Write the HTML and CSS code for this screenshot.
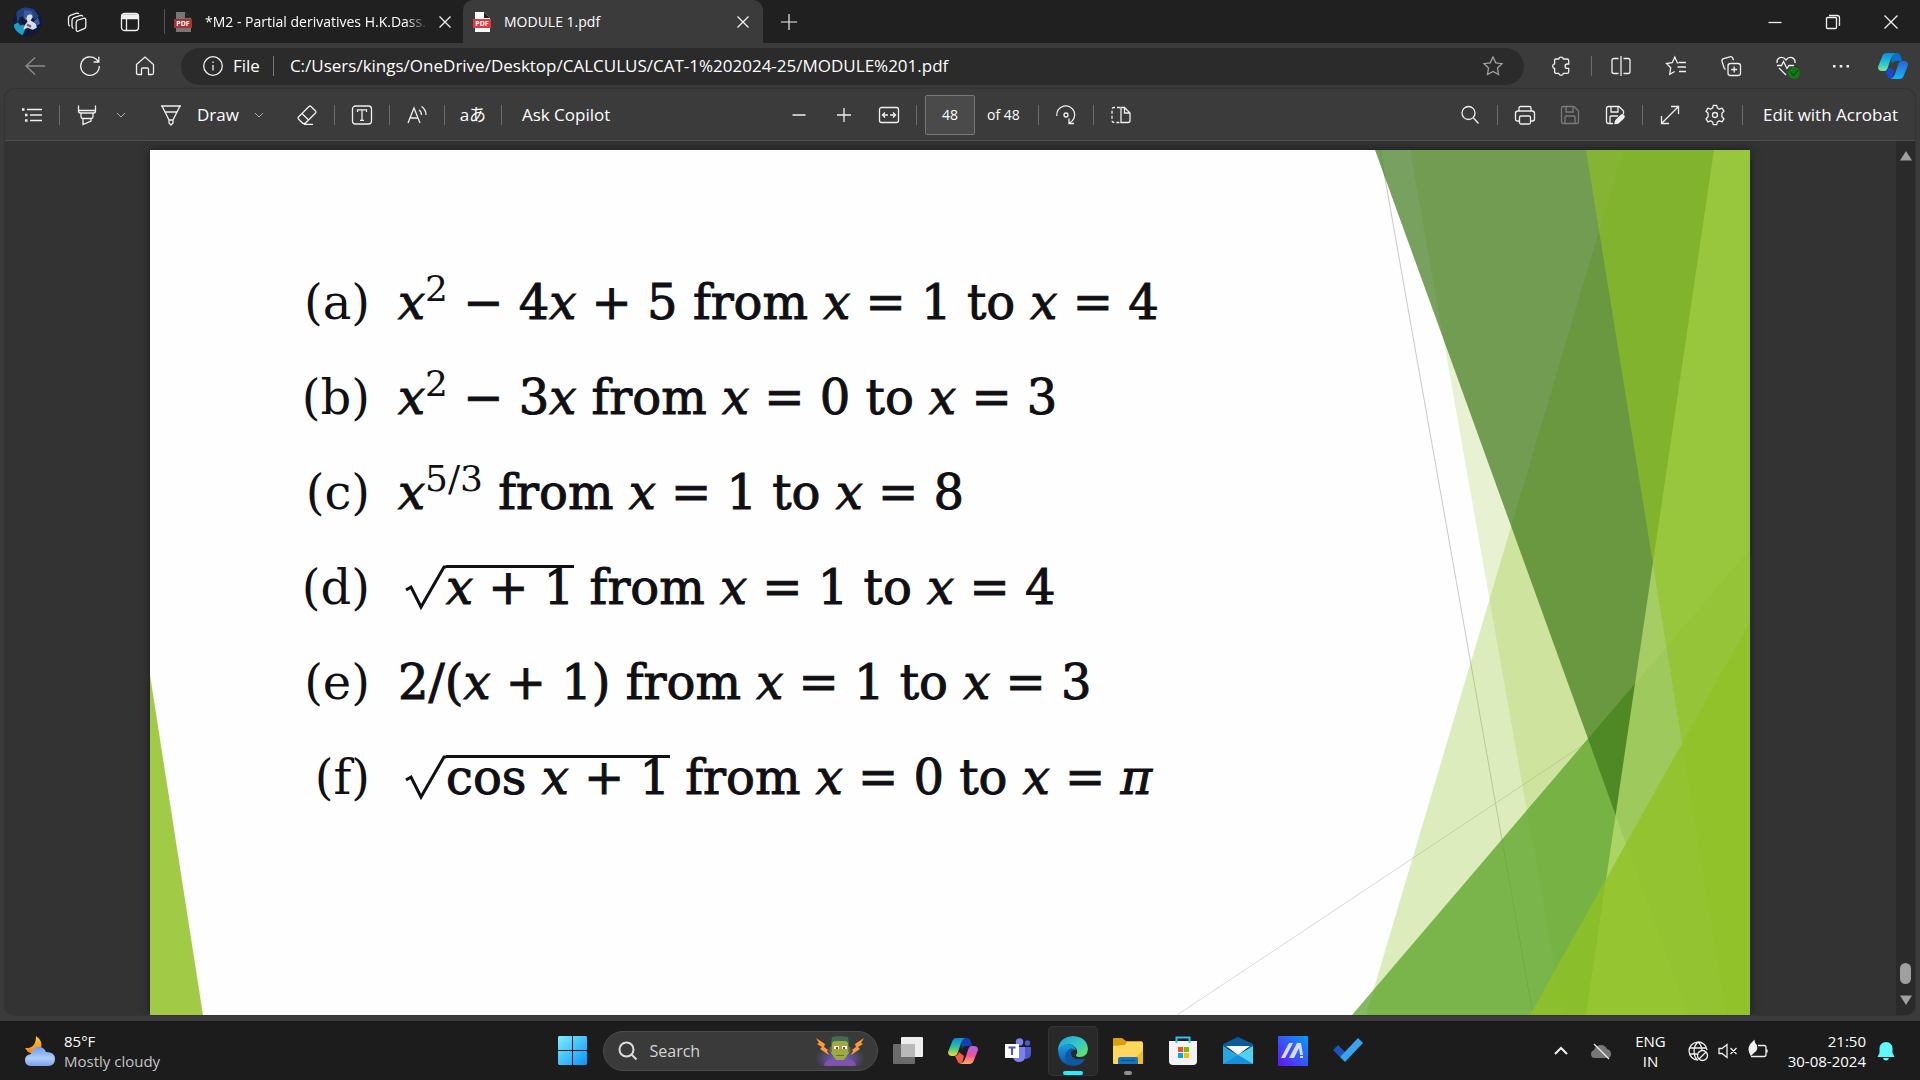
FILE: index.html
```html
<!DOCTYPE html>
<html lang="en">
<head>
<meta charset="utf-8">
<title>MODULE 1.pdf</title>
<link rel="stylesheet" href="styles.css">
</head>
<body>
<header class="tabstrip">
  <button class="avatar" aria-label="Profile"><svg viewBox="0 0 28 28"><defs><clipPath id="av"><circle cx="14" cy="14" r="14"/></clipPath></defs><g clip-path="url(#av)"><path fill="#101b3c" d="M0 0h28v28H0z"/><path fill="#24417e" d="M3 3l8-3 9 2 5 7-4 3-7-5-7 3-3 6z"/><path fill="#17a0c8" d="M1 17l4-2 2 3 3-1 2 4-3 7-8-4z"/><path fill="#d9deee" d="M14 5l4 1 1 4-2 3 5 3 1 4-4 2-5-2-4 2 1-4 3-4-2-4z"/><path fill="#3d5aa6" d="M11 3l7 1 2 5-3-2-3 1-2 5-2-3zM20 14l4-4 2 6-3 2z"/><path fill="#8a5a6a" d="M14 16l4 2-1 2-4-2z"/></g></svg></button>
  <button class="icon" aria-label="Workspaces"><svg viewBox="0 0 20 20"><path d="M9.500 8.500l7-2.200q2-.5 2.300 1.200v7q0 1.500-1.600 2.200l-5.800 2.500q-2 .6-2.200-1.200v-7q0-1.700 1-2.500z"/><path d="M6.500 16.500Q5 16 5 14V8.500Q5 6.500 7 5.700L13.500 3.500q1.700-.4 2.300 1"/><path d="M3 14Q1.500 13.500 1.500 11.500V6Q1.500 4 3.300 3.300L9.500 1.200q1.800-.4 2.400.8"/></svg></button>
  <button class="icon" aria-label="Tab actions"><svg viewBox="0 0 20 20"><rect x="1.500" y="1.500" width="17" height="17" rx="3"/><path class="solid" d="M2 3h16v3.500H2z"/><path d="M6.500 6v12"/></svg></button>
  <div class="tab idle">
    <svg class="favicon" viewBox="0 0 20 20"><path fill="#777" d="M3 0h9l6 6v14H3z"/><path fill="#222" d="M12 0l6 6h-6z"/><path fill="#a83232" d="M1 7h18v9H1z"/><text class="pdf" x="10" y="14">PDF</text></svg>
    <span class="tabname fade">*M2 - Partial derivatives H.K.Dass.</span>
    <button class="close" aria-label="Close tab"><svg viewBox="0 0 20 20"><path d="M4.500 4.500l11 11M15.500 4.500l-11 11"/></svg></button>
  </div>
  <div class="tab active">
    <svg class="favicon" viewBox="0 0 20 20"><path fill="#fff" d="M3 0h9l6 6v14H3z"/><path fill="#222" d="M12 0l6 6h-6z"/><path fill="#e5383b" d="M1 7h18v9H1z"/><text class="pdf" x="10" y="14">PDF</text></svg>
    <span class="tabname">MODULE 1.pdf</span>
    <button class="close" aria-label="Close tab"><svg viewBox="0 0 20 20"><path d="M4.500 4.500l11 11M15.500 4.500l-11 11"/></svg></button>
  </div>
  <button class="icon newtab" aria-label="New tab"><svg viewBox="0 0 20 20"><path d="M10 1v18M1 10h18"/></svg></button>
  <div class="window-controls">
    <button class="win" aria-label="Minimize"><svg viewBox="0 0 20 20"><path d="M3.500 10.500h13"/></svg></button>
    <button class="win" aria-label="Restore"><svg viewBox="0 0 20 20"><rect x="3.500" y="5.500" width="10" height="11" rx="1"/><path d="M6 3.500h8q2.500 0 2.500 2.500v8"/></svg></button>
    <button class="win" aria-label="Close"><svg viewBox="0 0 20 20"><path d="M3.500 3.500l13 13M16.500 3.500l-13 13"/></svg></button>
  </div>
</header>

<nav class="address">
  <button class="icon dim" aria-label="Back"><svg viewBox="0 0 20 20"><path d="M20 10H1M10 1.500L1 10l9 8.500"/></svg></button>
  <button class="icon" aria-label="Refresh"><svg viewBox="0 0 20 20"><path d="M19.300 10A9.300 9.300 0 1 1 16 3l2.500 2.500M18.800.8v5.200h-5.200"/></svg></button>
  <button class="icon" aria-label="Home"><svg viewBox="0 0 20 20"><path d="M1.500 8.500L10 1l8.500 7.500V17q0 1.500-1.500 1.500h-3.500V13q0-1-1-1h-5q-1 0-1 1v5.500H3Q1.500 18.500 1.500 17z"/></svg></button>
  <div class="urlbox">
    <svg class="glyph" viewBox="0 0 20 20"><circle cx="10" cy="10" r="9.300"/><path d="M10 9v5.500M10 5.500v1.500"/></svg>
    <label class="scheme" for="url">File</label>
    <input class="url" id="url" type="text" value="C:/Users/kings/OneDrive/Desktop/CALCULUS/CAT-1%202024-25/MODULE%201.pdf">
    <button class="icon muted" aria-label="Add to favourites"><svg viewBox="0 0 20 20"><path d="M10 1l2.800 5.800 6.200.9-4.500 4.400 1 6.400L10 15.500l-5.500 3 1-6.400L1 7.700l6.200-.9z"/></svg></button>
  </div>
  <div class="browser-actions">
    <button class="icon" aria-label="Extensions"><svg viewBox="0 0 20 20"><path d="M4.500 3H7.700a2.400 2.400 0 0 1 4.700 0H16q1.700 0 1.700 1.700V8h-1.400a2.200 2.200 0 0 0 0 4.400h1.400v3.300q0 1.700-1.700 1.700h-3.600a2.400 2.400 0 0 1-4.700 0H5.300q-1.700 0-1.700-1.700v-3.200a2.400 2.400 0 0 1 0-4.700V4q0-1 .9-1z"/></svg></button>
    <span class="rule"></span>
    <button class="icon" aria-label="Split screen"><svg viewBox="0 0 20 20"><path d="M7.500 2.500H3q-2 0-2 2v11q0 2 2 2h4.500M12.500 2.500H17q2 0 2 2v11q0 2-2 2h-4.500M10 0v20"/></svg></button>
    <button class="icon" aria-label="Favourites"><svg viewBox="0 0 20 20"><path d="M12.500 7L11.300 6.700 8.800 1 6.200 6.700.5 7.500l4.200 4.300-1 6.500 5-2.800M13 6.500h7M11.500 11H20M13 15.500h7"/></svg></button>
    <button class="icon" aria-label="Collections"><svg viewBox="0 0 20 20"><rect x="7" y="7.500" width="12.500" height="12" rx="2.500"/><path d="M13.200 10.500v6M10.200 13.500h6M4.500 13.500Q3.500 13 3 11.500L1 5.500Q.5 3.500 2.500 2.700L9 .8q2-.5 2.800 1.500l.7 2"/></svg></button>
    <button class="icon badged" aria-label="Browser essentials"><svg viewBox="0 0 20 20"><path d="M1 7Q.5 3 4 1.600 7.500.5 10 4q2.500-3.500 6-2.400Q19.500 3 19 7M3 12l7 7M1 9.500h4.500l2-4 3.500 7 2-3h5"/></svg><span class="badge"></span></button>
    <button class="icon" aria-label="More"><svg viewBox="0 0 20 20"><path class="solid plain" d="M2 9h2.500v2.500H2zM8.700 9h2.600v2.500H8.700zM15.500 9H18v2.500h-2.500z"/></svg></button>
  </div>
  <button class="copilot" aria-label="Copilot"><svg viewBox="0 0 30 30"><defs><linearGradient id="ca" x2="0" y2="1"><stop stop-color="#0c8fe0"/><stop offset=".5" stop-color="#20bfd8"/><stop offset="1" stop-color="#7be89a"/></linearGradient><linearGradient id="cb" x2="0" y2="1"><stop stop-color="#2b62dc"/><stop offset="1" stop-color="#14b9f5"/></linearGradient></defs><path fill="#0872c4" d="M13 2h6q3 0 4 4l1 4h-6q-3 0-4 4z"/><path fill="#1649d4" d="M7 20q3 0 4-4l5 4-2 8q-4 0-5-4z"/><path fill="url(#ca)" d="M9 2h8q-3 2-4 5l-3 9q-1 4-4 4H4q-4 0-4-4L4 6q1-4 5-4z"/><path fill="url(#cb)" d="M21 28h-8q3-2 4-5l3-9q1-4 4-4h2q4 0 4 4l-4 10q-1 4-5 4z"/></svg></button>
</nav>

<main class="viewer">
  <div class="toolbar">
    <div class="group">
      <button class="icon" aria-label="Contents"><svg viewBox="0 0 20 20"><path d="M5 4.500h15M8 10h12M8 15.500h12"/><path class="solid plain" d="M0 3.300h2.500v2.500H0zM3 8.800h2.500v2.500H3zM3 14.300h2.500v2.500H3z"/></svg></button>
      <span class="rule"></span>
      <button class="icon" aria-label="Highlight"><svg viewBox="0 0 20 20"><path d="M1.500.5V6q0 2 2 2h13q2 0 2-2V.5M4 8v3.500q0 2 1.500 2h9q1.500 0 1.500-2V8M6 14v5.500l8-3.500v-2M1.500 5.500h17"/></svg></button>
      <button class="chev" aria-label="Highlight colours"><svg viewBox="0 0 10 10"><path d="M1 3l4 4 4-4"/></svg></button>
      <button class="draw"><svg viewBox="0 0 20 20"><path d="M0 1h20M1 1l7 14v3l2 2 2-2v-3l7-14M4 7h12M8 15h4"/></svg>Draw</button>
      <button class="chev" aria-label="Pen options"><svg viewBox="0 0 10 10"><path d="M1 3l4 4 4-4"/></svg></button>
      <button class="icon eraser" aria-label="Erase"><svg viewBox="0 0 20 20"><path d="M1.500 12L12 1.500q1-1 2 0L18.500 6q1 1 0 2L8 18.500H6L1.500 14q-1-1 0-2zM5 8.500l6.500 6.500M7 19.300h9"/></svg></button>
      <span class="rule"></span>
      <button class="icon" aria-label="Add text"><svg viewBox="0 0 20 20"><rect x=".5" y="1" width="19" height="18" rx="3"/><path d="M5.500 7V4.800h9V7M10 4.800v10.500M8 15.300h4"/></svg></button>
      <span class="rule"></span>
      <button class="icon" aria-label="Read aloud"><svg viewBox="0 0 20 20"><path d="M1 18L7 3l6 15M3 13h8M12 5q2.500 1.500 2.500 5M14.500 1.500Q19 4.500 19 10"/></svg></button>
      <span class="rule"></span>
      <button class="icon translate" aria-label="Translate">aあ</button>
      <span class="rule"></span>
      <button class="text">Ask Copilot</button>
    </div>
    <div class="group center">
      <button class="icon" aria-label="Zoom out"><svg viewBox="0 0 20 20"><path d="M3.500 10h13"/></svg></button>
      <button class="icon spaced" aria-label="Zoom in"><svg viewBox="0 0 20 20"><path d="M10 3v14M3 10h14"/></svg></button>
      <button class="icon spaced" aria-label="Fit to width"><svg viewBox="0 0 20 20"><rect x=".5" y="2.500" width="19" height="15" rx="2"/><path d="M9 10H4M6 7.500L3.500 10 6 12.500M11 10h5M14 7.500l2.500 2.500-2.500 2.500"/></svg></button>
      <span class="rule tight"></span>
      <input class="page" type="text" value="48" aria-label="Page number">
      <span class="total">of 48</span>
      <span class="rule"></span>
      <button class="icon" aria-label="Rotate"><svg viewBox="0 0 20 20"><path d="M.8 11A9 9 0 1 1 13.500 18M13 13.500v5h5"/><circle cx="10" cy="10" r="2"/></svg></button>
      <span class="rule"></span>
      <button class="icon" aria-label="Page view"><svg viewBox="0 0 20 20"><path d="M10 2.500v15h7q2 0 2-2V8l-5.500-5.500zM13.500 3v5H19"/><path stroke-dasharray="3 2" d="M9 2.500H3q-2 0-2 2v11q0 2 2 2h6"/></svg></button>
    </div>
    <div class="group end">
      <button class="icon" aria-label="Find"><svg viewBox="0 0 20 20"><circle cx="8.500" cy="8" r="6.500"/><path d="M13.500 13l5 5.500"/></svg></button>
      <span class="rule"></span>
      <button class="icon" aria-label="Print"><svg viewBox="0 0 20 20"><path d="M4 6V3q0-1.500 1.500-1.500h9Q16 1.500 16 3v3M4 16H2.500Q.5 16 .5 14V8.500Q.5 6 3 6h14q2.500 0 2.500 2.500V14q0 2-2 2H16"/><rect x="4.500" y="11" width="11" height="8" rx="1.500"/></svg></button>
      <button class="icon spaced off" aria-label="Save"><svg viewBox="0 0 20 20"><path d="M3.500 1.500H14L18.500 6v10.500q0 2-2 2h-13q-2 0-2-2v-13q0-2 2-2zM6 2v5h7V2M5 18v-6q0-1 1-1h8q1 0 1 1v6"/></svg></button>
      <button class="icon spaced" aria-label="Save as"><svg viewBox="0 0 20 20"><path d="M8 18.500H3.500q-2 0-2-2v-13q0-2 2-2H14L18.500 6v3M6 2v5h7V2M5 18v-6q0-1 1-1h7"/><path class="solid" d="M10 18.500l.8-3 5.500-5.500q1.500-.8 2.500.7.8 1.200 0 2L13 18.200z"/></svg></button>
      <span class="rule"></span>
      <button class="icon" aria-label="Full screen"><svg viewBox="0 0 20 20"><path d="M1.500 18.500l17-17M11 1.500h7.500V9M1.500 11v7.500H9"/></svg></button>
      <button class="icon spaced" aria-label="Settings"><svg viewBox="0 0 20 20"><path stroke-linejoin="round" d="M8.300.3h3.400l.7 2.700 2 1.100 2.700-.9 1.900 3.100-2.100 1.900v3.600l2.100 1.900-1.900 3.100-2.700-.9-2 1.100-.7 2.700H8.300l-.7-2.700-2-1.100-2.700.9L1 13.700l2.100-1.900V8.200L1 6.300l1.900-3.100 2.700.9 2-1.100z"/><circle cx="10" cy="10" r="2.500"/></svg></button>
      <span class="rule"></span>
      <button class="text">Edit with Acrobat</button>
    </div>
  </div>

  <div class="stage">
    <article class="slide">
      <svg class="facets" viewBox="0 0 1600 865" preserveAspectRatio="none" aria-hidden="true">
        <path fill="none" stroke="#c8c8c8" d="M1230 0l153 865"/>
        <path fill="none" stroke="#d9d9d9" d="M1027 865L1600 484"/>
        <path fill="#90c226" fill-opacity=".3" d="M1473 0h127v865h-384z"/>
        <path fill="#90c226" fill-opacity=".2" d="M1260 0h340v865h-187z"/>
        <path fill="#54a021" fill-opacity=".72" d="M1202 865L1600 399v466z"/>
        <path fill="#3f7819" fill-opacity=".7" d="M1225 0h375v865h-62z"/>
        <path fill="#c0e474" fill-opacity=".7" d="M1564 0h36v865h-164z"/>
        <path fill="#90c226" fill-opacity=".65" d="M1436 0h164v865h-24z"/>
        <path fill="#90c226" fill-opacity=".8" d="M1380 865l220-393v393z"/>
        <path fill="#90c226" fill-opacity=".85" d="M0 525l53 340H0z"/>
      </svg>
      <ul class="problems">
        <li><span class="mark">(a)</span><span class="expr"><i>x</i><sup>2</sup> <b>−</b> 4<i>x</i> <b>+</b> 5 from <i>x</i> <b>=</b> 1 to <i>x</i> <b>=</b> 4</span></li>
        <li><span class="mark">(b)</span><span class="expr"><i>x</i><sup>2</sup> <b>−</b> 3<i>x</i> from <i>x</i> <b>=</b> 0 to <i>x</i> <b>=</b> 3</span></li>
        <li><span class="mark">(c)</span><span class="expr"><i>x</i><sup>5/3</sup> from <i>x</i> <b>=</b> 1 to <i>x</i> <b>=</b> 8</span></li>
        <li><span class="mark">(d)</span><span class="expr"><svg class="radical" viewBox="0 0 42 46"><path d="M2 25l5-3 10 20L40 2h2"/></svg><span class="radicand"><i>x</i> <b>+</b> 1</span> from <i>x</i> <b>=</b> 1 to <i>x</i> <b>=</b> 4</span></li>
        <li><span class="mark">(e)</span><span class="expr">2/(<i>x</i> <b>+</b> 1) from <i>x</i> <b>=</b> 1 to <i>x</i> <b>=</b> 3</span></li>
        <li><span class="mark">(f)</span><span class="expr"><svg class="radical" viewBox="0 0 42 46"><path d="M2 25l5-3 10 20L40 2h2"/></svg><span class="radicand">cos <i>x</i> <b>+</b> 1</span> from <i>x</i> <b>=</b> 0 to <i>x</i> <b>=</b> <i>π</i></span></li>
      </ul>
    </article>
    <div class="scrollbar">
      <svg viewBox="0 0 12 10"><path d="M6 0l6 9.500H0z"/></svg>
      <span class="thumb"></span>
      <svg viewBox="0 0 12 10"><path d="M6 10L0 .5h12z"/></svg>
    </div>
  </div>
</main>

<footer class="taskbar">
  <div class="weather">
    <svg viewBox="0 0 30 30"><defs><linearGradient id="cl" x2="0" y2="1"><stop stop-color="#6c9cf0"/><stop offset=".6" stop-color="#b0cbf8"/><stop offset="1" stop-color="#7ba2ee"/></linearGradient><linearGradient id="mo" x2="0" y2="1"><stop stop-color="#ffc83a"/><stop offset="1" stop-color="#f0821c"/></linearGradient></defs><path fill="url(#mo)" d="M11 0q7 5 5 12-5 9-13 4l-3-4q11 1 11-12z"/><path fill="url(#cl)" d="M7 30q-7 0-7-6 0-5 6-6 2-7 8-7 5 0 7 5 9 0 9 7 0 7-7 7z"/></svg>
    <div class="lines"><span>85°F</span><span class="sub">Mostly cloudy</span></div>
  </div>
  <div class="apps">
    <button class="app" aria-label="Start"><svg viewBox="0 0 30 30"><defs><linearGradient id="wi" x2="1" y2="1"><stop stop-color="#7defff"/><stop offset="1" stop-color="#0a93fb"/></linearGradient></defs><path fill="url(#wi)" d="M1 0h13v14H0V1zM15 0h13l1 1v13H15zM0 15h14v14H1l-1-1zM15 15h14v13l-1 1H15z"/></svg></button>
    <label class="search"><svg class="lens" viewBox="0 0 20 20"><circle cx="8.500" cy="8.500" r="7"/><path d="M13.500 13.500l5 5"/></svg><input type="text" placeholder="Search">
      <svg class="monster" viewBox="0 0 50 30"><defs><radialGradient id="gl"><stop stop-color="#7a68d8"/><stop offset="1" stop-color="#7a68d8" stop-opacity="0"/></radialGradient></defs><ellipse cx="25" cy="23" rx="25" ry="14" fill="url(#gl)"/><path fill="#7f52ae" d="M9 30q0-6 8-7h16q8 1 8 7z"/><path fill="#9ba843" d="M17 3h16l1 14-5 7h-8l-5-7z"/><path fill="#426b52" d="M17 1q8-2 16 0l1 7-3-3H19l-3 3z"/><path fill="#6b7a2e" d="M15 11h2v5h-2zM33 11h2v5h-2zM21 19h8v1h-8z"/><path fill="#fff" d="M19 10h5v3h-5zM27 10h5v3h-5z"/><path fill="#c22" d="M21 11h2v2h-2zM28 11h2v2h-2z"/><path fill="#ff9a3a" d="M1 2l9 6-1 3 4 3-1 1 2 4-9-6 2-2-5-3 2-1zM49 2l-9 6 1 3-4 3 1 1-2 4 9-6-2-2 5-3-2-1z"/></svg></label>
    <button class="app" aria-label="Task view"><svg viewBox="0 0 30 30"><rect x="8" y="1" width="22" height="20" rx="1" fill="#eee"/><rect y="8" width="22" height="20" rx="1" fill="#6b6b6b"/><path fill="#b9b9b9" d="M8 8h14v13H8z"/></svg></button>
    <button class="app" aria-label="Copilot"><svg viewBox="0 0 30 30"><defs><linearGradient id="cc" x2="0" y2="1"><stop stop-color="#0b86e0"/><stop offset=".5" stop-color="#26c4a0"/><stop offset="1" stop-color="#f4dc2a"/></linearGradient><linearGradient id="cd" x2="0" y2="1"><stop stop-color="#a866ee"/><stop offset=".5" stop-color="#ee4f9e"/><stop offset="1" stop-color="#ffae58"/></linearGradient></defs><path fill="#123fb4" d="M13 2h6q3 0 4 4l1 4h-6q-3 0-4 4z"/><path fill="#f25a4c" d="M7 20q3 0 4-4l5 4-2 8q-4 0-5-4z"/><path fill="url(#cc)" d="M9 2h8q-3 2-4 5l-3 9q-1 4-4 4H4q-4 0-4-4L4 6q1-4 5-4z"/><path fill="url(#cd)" d="M21 28h-8q3-2 4-5l3-9q1-4 4-4h2q4 0 4 4l-4 10q-1 4-5 4z"/></svg></button>
    <button class="app" aria-label="Teams"><svg viewBox="0 0 30 30"><circle cx="16.500" cy="6" r="3.800" fill="#7b83eb"/><circle cx="24.500" cy="7" r="2.700" fill="#5059c9"/><path fill="#5059c9" d="M20 11h8v7q0 4-5 5h-3z"/><path fill="#7b83eb" d="M10 11h12v9q0 6-6 6-5 0-6-5z"/><path fill="#fff" d="M2 8h14v14H2z"/><path fill="#4b53bc" d="M5.500 10.500h7v2H10V19H8v-6.500H5.500z"/></svg></button>
    <button class="app current" aria-label="Edge"><svg viewBox="0 0 30 30"><defs><linearGradient id="ea" x2="1" y2="1"><stop stop-color="#1b9de2"/><stop offset=".5" stop-color="#35c8c8"/><stop offset="1" stop-color="#6ae84e"/></linearGradient><linearGradient id="eb" x2="0" y2="1"><stop stop-color="#1aa0e0"/><stop offset="1" stop-color="#0a50a8"/></linearGradient></defs><path fill="url(#eb)" d="M0 14Q2 7 9 8q8 1 9 6-6-1-5 5 2 6 14 4-4 7-12 7Q1 29 0 14z"/><path fill="#0c59a4" d="M10 28q-6-8 0-14 3-3 7 0-5 0-4 5 2 6 14 4-5 9-17 5z"/><path fill="url(#ea)" d="M0 14Q1 1 15 0q14 1 15 13-1 8-8 8-4 0-4-2 2-2 1-5-2-5-9-6-7 0-10 6z"/></svg></button>
    <button class="app open" aria-label="File Explorer"><svg viewBox="0 0 30 30"><path fill="#d9a00c" d="M0 3q0-1 1-1h8l4 3h16v5H0z"/><path fill="#ffd75a" d="M0 10l12-1 2-3h15q1 0 1 1v20q0 1-1 1H1q-1 0-1-1z"/><path fill="#f6bd20" d="M16 28h13q1 0 1-1V14z"/><path fill="#1572c4" d="M5 28v-5q0-2 2-2h16q2 0 2 2v5z"/><path fill="#0a4f92" d="M8 24h14v1H8z"/></svg></button>
    <button class="app" aria-label="Microsoft Store"><svg viewBox="0 0 30 30"><path fill="none" stroke="#30c0ec" stroke-width="2" d="M8.500 8V1.500h13V8"/><path fill="#f3f3f3" d="M1 5h28v20q0 4-4 4H5q-4 0-4-4z"/><path fill="#30c0ec" d="M7.500 5h2v2h-2zM20.500 5h2v2h-2z"/><path fill="#f25022" d="M10 11h5v5h-5z"/><path fill="#7fba00" d="M16 11h5v5h-5z"/><path fill="#00a4ef" d="M10 17h5v5h-5z"/><path fill="#ffb900" d="M16 17h5v5h-5z"/></svg></button>
    <button class="app" aria-label="Mail"><svg viewBox="0 0 30 30"><path fill="#0a5a9e" d="M0 8L15 1l15 7v4H0z"/><path fill="#2aa5dd" d="M0 10l15 9 15-9v18H0z"/><path fill="#50d2f5" d="M15 19l15-9v18z"/><path fill="#1490dc" d="M0 28l15-9 15 9z"/><path fill="#f4f4f4" d="M3 10h24l-12 9z"/></svg></button>
    <button class="app" aria-label="MyASUS"><svg viewBox="0 0 30 30"><defs><linearGradient id="my" x1="0" y1="1" x2="1" y2="0"><stop stop-color="#6414f5"/><stop offset="1" stop-color="#069cfb"/></linearGradient></defs><path fill="url(#my)" d="M0 0h30v30H0z"/><path fill="#d8dcff" d="M3 22L11 7h4L7 22zM11 22l8-15h4l2 12h-3l-1-7-5 10zM22 20h3v2h-3z"/></svg></button>
    <button class="app" aria-label="To Do"><svg viewBox="0 0 30 30"><path fill="#1857b8" d="M0 14l5-5 7 7-5 5z"/><path fill="#3ba3ee" d="M7 21L25 2l5 5-18 19z"/></svg></button>
  </div>
  <div class="tray">
    <svg class="tico" viewBox="0 0 20 20"><path stroke-width="2" d="M4 13l6-6 6 6"/></svg>
    <svg class="tico cloud" viewBox="0 0 20 20"><path class="grey" d="M4 17q-4 0-4-4 0-3 3-4 2-5 7-5 4 0 6 4 4 1 4 5 0 4-4 4z"/><path d="M3 3l15 15"/></svg>
    <div class="lines lang"><span>ENG</span><span>IN</span></div>
    <svg class="tico" viewBox="0 0 20 20"><path d="M10 19A9 9 0 1 1 19 9M1.500 7h17M1.500 13H9M10 1Q6 5 6 10t3 9M10 1q3.500 3 4 8"/><circle cx="14.500" cy="14.500" r="5"/><path d="M11 18l7-7"/></svg>
    <svg class="tico" viewBox="0 0 20 20"><path d="M1 7.500h3L9 3.500v13l-5-4H1zM12.500 7l6 6M18.500 7l-6 6"/></svg>
    <svg class="tico" viewBox="0 0 20 20"><path d="M10 4.500h6q2 0 2 2v7q0 2-2 2H3M19 8.500v3"/><path class="solid" d="M2 12Q-1 6 6 0q0 2 2 4 2 5-2 7l-3 3z"/></svg>
    <div class="lines clock"><span>21:50</span><span>30-08-2024</span></div>
    <svg class="bell" viewBox="0 0 20 20"><path d="M10 1q6 0 6.500 6.500V12l2 4h-17l2-4V7.500Q4 1 10 1zM7 17h6q-.5 2.500-3 2.500T7 17z"/></svg>
  </div>
</footer>
</body>
</html>
```
FILE: styles.css
```css
* { box-sizing: border-box; }
body {
  margin: 0;
  min-height: 100vh;
  display: flex;
  flex-direction: column;
  background: #3b3b3b;
  color: #fff;
  font: 17px/20px "Open Sans", "Noto Sans", sans-serif;
}
button, input { font: inherit; color: inherit; }
button {
  border: 0;
  padding: 0;
  background: none;
  display: flex;
  align-items: center;
  justify-content: center;
  flex: none;
}
input { border: 0; outline: 0; background: none; min-width: 0; padding: 0; }
svg { display: block; flex: none; }

.icon { width: 28px; height: 28px; }
.icon svg, .glyph, .draw svg, .win svg, .tico, .close svg {
  width: 20px;
  height: 20px;
  fill: none;
  stroke: #f0f0f0;
  stroke-width: 1.3;
  overflow: visible;
}
.icon .solid, .tico .solid { fill: #f0f0f0; }
.icon .plain { stroke: none; }
.dim { opacity: .45; }
.muted { opacity: .6; }
.off { opacity: .35; }
.rule { width: 1px; height: 20px; margin: 0 13px; background: #6c6c6c; flex: none; }

/* Tab strip */
.tabstrip { display: flex; align-items: center; height: 43px; padding-left: 13px; background: #202020; }
.avatar svg { width: 29px; height: 29px; }
.tabstrip > .icon { margin-left: 21px; }
.tabstrip .avatar + .icon + .icon { margin-left: 25px; }
.tab { display: flex; align-items: center; height: 43px; width: 300px; padding: 0 10px 0 9px; font-size: 14px; flex: none; }
.idle { margin-left: 20px; width: 299px; padding-right: 8px; }
.idle::before { content: ""; width: 1px; height: 25px; margin: 0 8px 0 -9px; background: #555; }
.active { background: #3b3b3b; border-radius: 10px 10px 0 0; }
.favicon { width: 20px; height: 20px; margin-right: 12px; }
.pdf { font: bold 7px "Open Sans", sans-serif; fill: #fff; text-anchor: middle; }
.tabname { flex: 1; min-width: 0; overflow: hidden; white-space: nowrap; }
.fade { mask-image: linear-gradient(90deg, #000 90%, transparent); }
.close { width: 20px; height: 20px; margin-left: 7px; }
.tabstrip > .newtab { margin-left: 12px; }
.newtab svg { width: 18px; height: 18px; }
.window-controls { display: flex; margin-left: auto; }
.win { width: 58px; height: 43px; }

/* Address row */
.address { display: flex; align-items: center; height: 46px; padding: 0 12px 0 21px; gap: 27px; }
.urlbox { flex: 1; display: flex; align-items: center; height: 37px; margin-left: -5px; padding: 0 17px 0 22px; border-radius: 19px; background: #2b2b2b; }
.scheme { margin-left: 10px; padding-right: 13px; border-right: 1px solid #777; }
.url { flex: 1; margin-left: 16px; }
.browser-actions { display: flex; gap: 27px; align-items: center; margin-left: -4px; }
.browser-actions .rule { margin: 0 -12px 0 -11px; }
.badged { position: relative; }
.badge { position: absolute; right: 0; bottom: 1px; width: 12px; height: 12px; border-radius: 50%; background: #107c10; }
.badge::after { content: ""; position: absolute; left: 3px; top: 3px; width: 6px; height: 3px; border: solid #063f06; border-width: 0 0 1px 1px; transform: rotate(-45deg); }
.copilot { margin-left: -4px; }
.copilot svg { width: 30px; height: 30px; }

/* PDF viewer */
.viewer { flex: 1; display: flex; flex-direction: column; margin: 0 5px 6px; border-radius: 10px; overflow: hidden; background: #333; box-shadow: 0 0 2px #222; }
.toolbar { display: grid; grid-template-columns: 1fr auto 1fr; align-items: center; height: 52px; padding: 0 17px 0 13px; background: #3b3b3b; border-bottom: 1px solid #505050; }
.group { display: flex; align-items: center; white-space: nowrap; }
.center { margin-left: 4px; }
.end { justify-content: flex-end; }
.chev { width: 16px; height: 28px; margin-left: 12px; }
.chev svg { width: 10px; height: 10px; fill: none; stroke: #aaa; }
.draw { margin-left: 32px; gap: 16px; }
.eraser { margin-left: 26px; }
.translate { width: 30px; }
.translate { font: 17px/20px "Open Sans", "Noto Sans CJK JP", sans-serif; }
.text { margin-left: 7px; }
.spaced { margin-left: 17px; }
.tight { margin-right: 8px; }
.page { width: 50px; height: 40px; border: 1px solid #777; border-radius: 2px; background: #4a4a4a; text-align: center; font-size: 14px; }
.total { width: 36px; margin: 0 2px 0 12px; font-size: 14px; }

.stage { flex: 1; display: flex; }
.slide { flex: 1; position: relative; margin: 9px 146px 0 145px; background: #fefefe; box-shadow: 0 0 8px #1c1c1c; }
.facets { position: absolute; inset: 0; width: 100%; height: 100%; }
.problems { position: relative; margin: 0; padding: 105px 0 0 140px; list-style: none; color: #101014; font: 48px/95px "DejaVu Serif", serif; white-space: nowrap; -webkit-text-stroke: 1px #101014; }
.problems li { display: flex; height: 95px; }
.mark { width: 80px; text-align: right; margin-right: 28px; -webkit-text-stroke: 0; }
.expr { display: block; }
.problems b { font-weight: normal; }
.problems sup { font-size: 36px; line-height: 0; vertical-align: 18px; -webkit-text-stroke: 0; }
.radical { display: inline-block; width: 42px; height: 46px; margin-left: 6px; vertical-align: -7px; fill: none; stroke: #101014; stroke-width: 3; }
.radicand { display: inline-block; border-top: 3px solid #101014; line-height: 38px; }

.scrollbar { width: 19px; padding: 10px 0; background: #2a2a2a; display: flex; flex-direction: column; align-items: center; }
.scrollbar svg { width: 12px; height: 10px; fill: #9f9f9f; }
.thumb { width: 11px; height: 21px; margin: auto 0 11px; border-radius: 6px; background: #9f9f9f; }

/* Taskbar */
.taskbar { display: grid; grid-template-columns: 1fr auto 1fr; align-items: center; height: 59px; background: #1c1c1c; font-size: 15px; }
.weather { display: flex; align-items: center; gap: 9px; padding-left: 25px; }
.weather svg { width: 30px; height: 30px; }
.lines { display: flex; flex-direction: column; }
.sub { color: #c4c4c4; }
.apps { display: flex; gap: 5px; align-items: center; }
.app { position: relative; width: 50px; height: 50px; border-radius: 5px; }
.app svg { width: 30px; height: 30px; }
.current { background: #292929; box-shadow: inset 0 0 0 1px #343434; }
.current::after, .open::after { content: ""; position: absolute; bottom: 1px; left: 15px; width: 20px; height: 4px; border-radius: 2px; background: #2cebfa; }
.open::after { left: 21px; width: 8px; background: #909090; }
.search { display: flex; align-items: center; width: 275px; height: 40px; padding: 0 12px 0 14px; border: 1px solid #4c4c4c; border-radius: 20px; background: #3a3a3a; font-size: 16px; }
.search input { flex: 1; margin-left: 12px; }
.search input::placeholder { color: #d4d4d4; opacity: 1; }
.lens { width: 20px; height: 20px; fill: none; stroke: #ddd; stroke-width: 2; }
.monster { width: 50px; height: 30px; }
.tray { display: flex; align-items: center; justify-content: flex-end; gap: 10px; padding-right: 24px; }
.cloud { margin-left: 10px; }
.tico .grey { fill: #777; stroke: none; }
.lang { align-items: center; margin: 0 12px 0 14px; }
.clock { align-items: flex-end; margin-left: 10px; }
.bell { width: 20px; height: 20px; fill: #60f8ff; }
```
